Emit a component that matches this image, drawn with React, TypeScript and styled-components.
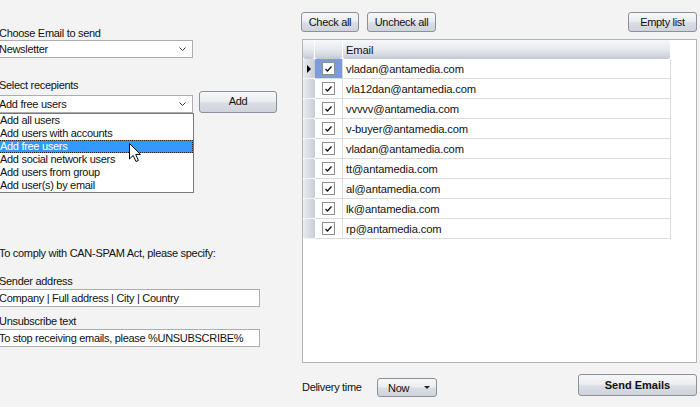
import React from "react";
import styled, { createGlobalStyle, css } from "styled-components";

const GlobalStyle = createGlobalStyle`
  html, body { margin: 0; padding: 0; }
  body {
    width: 700px;
    height: 407px;
    overflow: hidden;
    background: #f3f3f3;
    font-family: "Liberation Sans", Arial, sans-serif;
    font-size: 11px;
    letter-spacing: -0.3px;
    color: #111;
  }
  * { box-sizing: border-box; }
`;

const Page = styled.div`
  display: flex;
  height: 407px;
`;

const LeftPane = styled.div`
  width: 290px;
  margin-left: -5px;
  padding-top: 26px;
  display: flex;
  flex-direction: column;
  flex-shrink: 0;
`;

const Label = styled.div<{ $top?: number; $gap?: number }>`
  line-height: 14px;
  padding-left: 4px;
  margin-top: ${({ $top }) => $top ?? 0}px;
  margin-bottom: ${({ $gap }) => $gap ?? 0}px;
  white-space: nowrap;
`;

const Field = styled.div<{ $width: number }>`
  position: relative;
  width: ${({ $width }) => $width}px;
  height: 18px;
  background: #fff;
  border: 1px solid #abadb3;
  display: flex;
  align-items: center;
  padding: 0 3px;
  white-space: nowrap;
`;

const ComboArrow = styled.svg`
  margin-left: auto;
  margin-right: 3px;
  width: 7px;
  height: 4px;
`;

const RecipientsRow = styled.div`
  display: flex;
  align-items: flex-end;
  margin-top: 20px;
`;

const RecipientsColumn = styled.div`
  display: flex;
  flex-direction: column;
`;

const buttonLook = css`
  height: 20px;
  border: 1px solid #8b9099;
  border-radius: 3px;
  background: linear-gradient(#f6f7f8 0%, #eceef1 45%, #dadee4 55%, #cfd3da 100%);
  font-family: inherit;
  font-size: 11px;
  letter-spacing: -0.3px;
  color: #111;
  padding: 0;
  display: flex;
  align-items: center;
  justify-content: center;
`;

const Button = styled.button<{ $width: number; $height?: number; $bold?: boolean }>`
  ${buttonLook};
  width: ${({ $width }) => $width}px;
  height: ${({ $height }) => $height ?? 20}px;
  font-weight: ${({ $bold }) => ($bold ? 700 : 400)};
  flex-shrink: 0;
`;

const AddButton = styled(Button)`
  margin-left: 6px;
  padding-bottom: 2px;
`;

const DropList = styled.div`
  position: absolute;
  top: 17px;
  left: -1px;
  width: 199px;
  background: #fff;
  border: 1px solid #7a7a7a;
  z-index: 5;
`;

const DropItem = styled.div<{ $selected?: boolean }>`
  height: 13px;
  line-height: 13px;
  padding-left: 4px;
  white-space: nowrap;
  ${({ $selected }) =>
    $selected &&
    css`
      background: #3399ff;
      color: #fff;
      outline: 1px dotted #222;
      outline-offset: -1px;
    `}
`;

const Cursor = styled.svg`
  position: absolute;
  left: 133px;
  top: 29px;
  width: 13px;
  height: 20px;
`;

const Notice = styled(Label)``;

const RightPane = styled.div`
  width: 397px;
  margin-left: 16px;
  padding-top: 12px;
  display: flex;
  flex-direction: column;
`;

const Toolbar = styled.div`
  display: flex;
  padding-right: 1px;
  gap: 8px;
`;

const Spacer = styled.div`
  flex: 1;
`;

const Grid = styled.div`
  margin-top: 7px;
  margin-left: 1px;
  width: 395px;
  height: 324px;
  background: #fff;
  border: 1px solid #b4b4b4;
`;

const GridRow = styled.div<{ $header?: boolean }>`
  display: flex;
  height: ${({ $header }) => ($header ? 19 : 20)}px;
`;

const headerLook = css`
  background: linear-gradient(#f7f8fa 0%, #e6e9ee 50%, #d3d7df 80%, #c3c8d1 100%);
  border-radius: 3px;
  border-right: 1px solid #fff;
`;

const IndicatorCell = styled.div<{ $header?: boolean }>`
  width: 12px;
  display: flex;
  align-items: center;
  justify-content: center;
  ${({ $header }) =>
    $header
      ? headerLook
      : css`
          background: linear-gradient(90deg, #e9ebef 0%, #dde0e6 40%, #c8ccd4 100%);
          border-radius: 2px;
          border-bottom: 1px solid #f3f4f6;
        `}
`;

const CheckCell = styled.div<{ $header?: boolean; $active?: boolean }>`
  width: 28px;
  display: flex;
  align-items: center;
  justify-content: center;
  ${({ $header, $active }) =>
    $header
      ? headerLook
      : css`
          background: ${$active ? "#7d9bd8" : "#fff"};
          border-right: 1px solid #dcdcdc;
          border-bottom: 1px solid #dcdcdc;
        `}
`;

const EmailCell = styled.div<{ $header?: boolean }>`
  width: 328px;
  display: flex;
  align-items: center;
  padding-left: 3px;
  font-size: 11.2px;
  letter-spacing: -0.15px;
  ${({ $header }) =>
    $header
      ? headerLook
      : css`
          border-right: 1px solid #dcdcdc;
          border-bottom: 1px solid #dcdcdc;
        `}
`;

const CheckBox = styled.div`
  width: 13px;
  height: 13px;
  border: 1px solid #8e8f8f;
  background: #fff;
  display: flex;
  align-items: center;
  justify-content: center;
`;

const RowMarker = styled.div`
  width: 0;
  height: 0;
  border-top: 4px solid transparent;
  border-bottom: 4px solid transparent;
  border-left: 4px solid #000;
  margin-right: 1px;
`;

const BottomBar = styled.div`
  display: flex;
  align-items: flex-end;
  margin-top: 11px;
  height: 23px;
  padding-left: 1px;
  padding-right: 1px;
`;

const DeliveryLabel = styled.div`
  width: 75px;
  line-height: 19px;
  white-space: nowrap;
`;

const NowButton = styled(Button)`
  justify-content: flex-start;
  padding-left: 10px;
`;

const NowArrow = styled.span`
  margin-left: auto;
  margin-right: 6px;
  width: 0;
  height: 0;
  border-left: 3px solid transparent;
  border-right: 3px solid transparent;
  border-top: 3px solid #222;
`;

const SendButton = styled(Button)`
  align-self: flex-start;
  letter-spacing: 0;
`;

const recipientOptions = [
  "Add all users",
  "Add users with accounts",
  "Add free users",
  "Add social network users",
  "Add users from group",
  "Add user(s) by email",
];

const emails = [
  "vladan@antamedia.com",
  "vla12dan@antamedia.com",
  "vvvvv@antamedia.com",
  "v-buyer@antamedia.com",
  "vladan@antamedia.com",
  "tt@antamedia.com",
  "al@antamedia.com",
  "lk@antamedia.com",
  "rp@antamedia.com",
];

const Chevron = () => (
  <ComboArrow viewBox="0 0 7 4">
    <path d="M0.5 0.5 L3.5 3.5 L6.5 0.5" fill="none" stroke="#333" strokeWidth="1" />
  </ComboArrow>
);

const Tick = () => (
  <svg width="9" height="8" viewBox="0 0 9 8">
    <path d="M1.5 4 L3.5 6 L7.5 1.5" fill="none" stroke="#111" strokeWidth="1.3" />
  </svg>
);

export default function App() {
  return (
    <>
      <GlobalStyle />
      <Page>
        <LeftPane>
          <Label>Choose Email to send</Label>
          <Field $width={198}>
            Newsletter
            <Chevron />
          </Field>

          <RecipientsRow>
            <RecipientsColumn>
              <Label $gap={3}>Select recepients</Label>
              <Field $width={198}>
                Add free users
                <Chevron />
                <DropList>
                  {recipientOptions.map((o) => (
                    <DropItem key={o} $selected={o === "Add free users"}>
                      {o}
                    </DropItem>
                  ))}
                  <Cursor viewBox="0 0 13 20">
                    <path
                      d="M0.5 0.5 L0.5 16 L4.2 12.4 L7 18.5 L9.4 17.4 L6.7 11.4 L11.5 11.4 Z"
                      fill="#fff"
                      stroke="#000"
                      strokeWidth="1"
                      strokeLinejoin="round"
                    />
                  </Cursor>
                </DropList>
              </Field>
            </RecipientsColumn>
            <AddButton $width={78} $height={22}>
              Add
            </AddButton>
          </RecipientsRow>

          <Notice $top={133}>To comply with CAN-SPAM Act, please specify:</Notice>
          <Label $top={14} $gap={1}>Sender address</Label>
          <Field $width={265}>Company | Full address | City | Country</Field>
          <Label $top={7} $gap={1}>Unsubscribe text</Label>
          <Field $width={265}>To stop receiving emails, please %UNSUBSCRIBE%</Field>
        </LeftPane>

        <RightPane>
          <Toolbar>
            <Button $width={58}>Check all</Button>
            <Button $width={69}>Uncheck all</Button>
            <Spacer />
            <Button $width={69}>Empty list</Button>
          </Toolbar>

          <Grid>
            <GridRow $header>
              <IndicatorCell $header />
              <CheckCell $header />
              <EmailCell $header>Email</EmailCell>
            </GridRow>
            {emails.map((e, i) => (
              <GridRow key={i}>
                <IndicatorCell>{i === 0 && <RowMarker />}</IndicatorCell>
                <CheckCell $active={i === 0}>
                  <CheckBox>
                    <Tick />
                  </CheckBox>
                </CheckCell>
                <EmailCell>{e}</EmailCell>
              </GridRow>
            ))}
          </Grid>

          <BottomBar>
            <DeliveryLabel>Delivery time</DeliveryLabel>
            <NowButton $width={60} $height={19}>
              Now
              <NowArrow />
            </NowButton>
            <Spacer />
            <SendButton $width={119} $height={22} $bold>
              Send Emails
            </SendButton>
          </BottomBar>
        </RightPane>
      </Page>
    </>
  );
}
